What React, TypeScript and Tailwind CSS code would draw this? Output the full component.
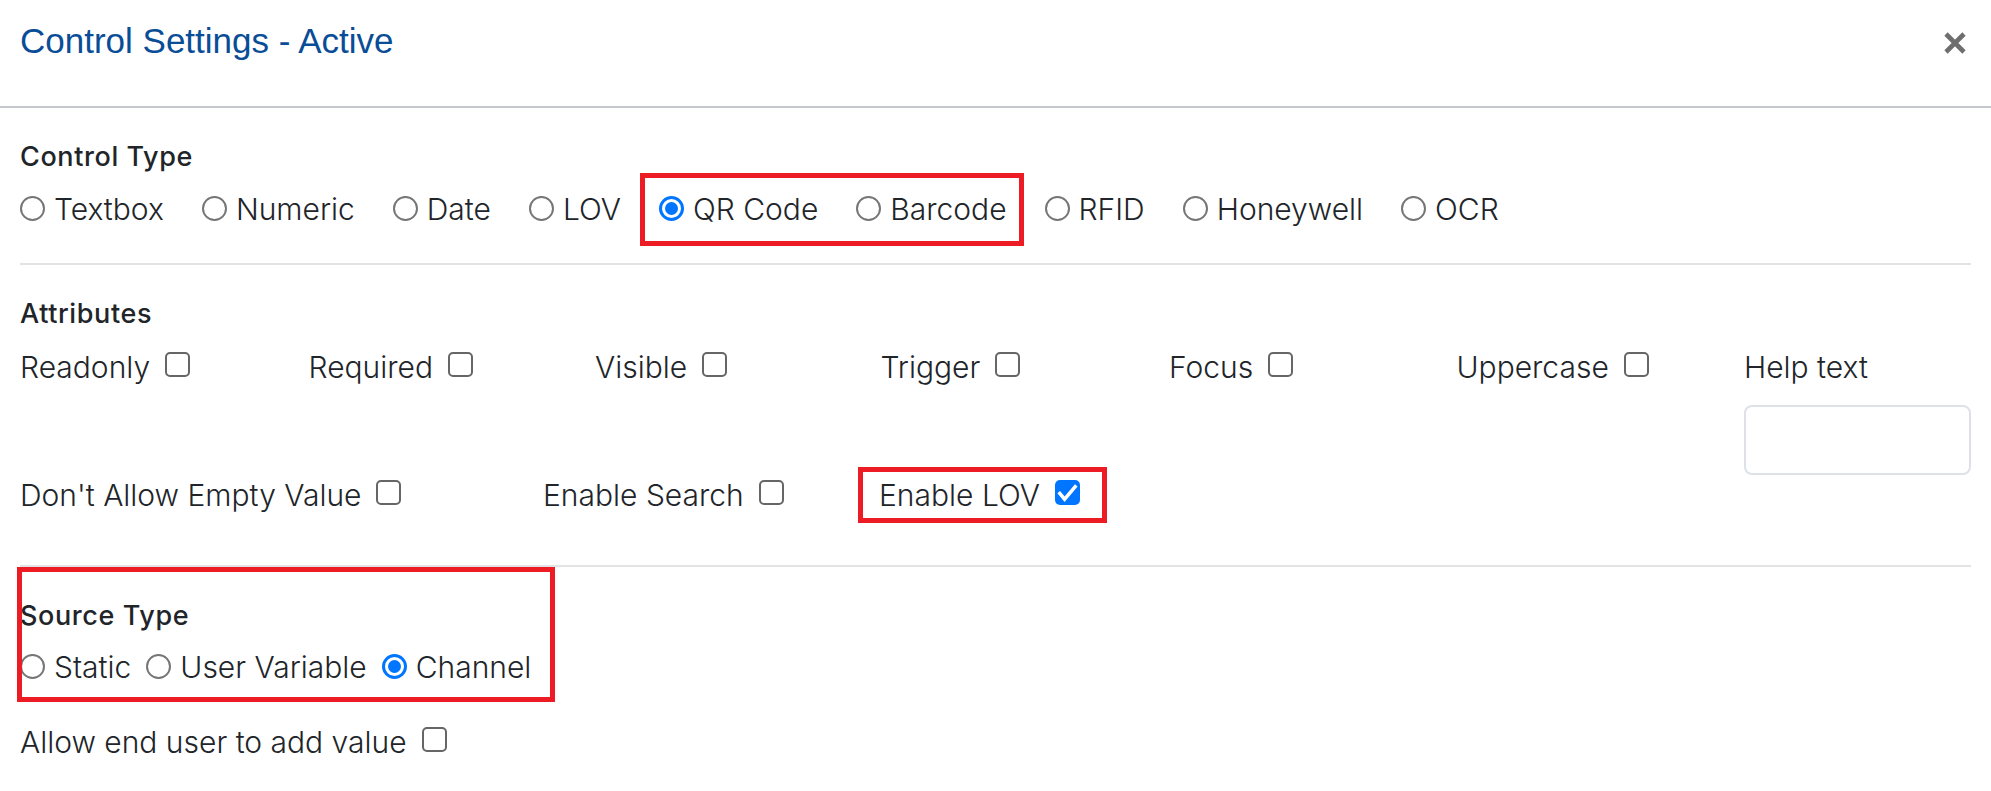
import { ReactNode } from "react";

function Radio({ checked }: { checked?: boolean }) {
  if (checked) {
    return (
      <span className="mb-[2px] flex h-[25px] w-[25px] shrink-0 items-center justify-center rounded-full border-[3px] border-[#0075ff] bg-white">
        <span className="h-[13px] w-[13px] rounded-full bg-[#0075ff]" />
      </span>
    );
  }
  return <span className="mb-[2px] h-[25px] w-[25px] shrink-0 rounded-full border-2 border-[#767676] bg-white" />;
}

function Check({ checked }: { checked?: boolean }) {
  if (checked) {
    return (
      <span className="mb-[5px] flex h-[25px] w-[25px] shrink-0 items-center justify-center rounded-[5px] bg-[#0075ff]">
        <svg width="25" height="25" viewBox="0 0 26 26">
          <path d="M5 14l5 6 11-13" fill="none" stroke="white" strokeWidth="3.6" strokeLinecap="square" />
        </svg>
      </span>
    );
  }
  return <span className="mb-[5px] h-[25px] w-[25px] shrink-0 rounded-[5px] border-2 border-[#666] bg-white" />;
}

function Option({ label, checked }: { label: string; checked?: boolean }) {
  return (
    <label className="flex items-center gap-[9px]">
      <Radio checked={checked} />
      <span className="whitespace-nowrap">{label}</span>
    </label>
  );
}

function Attr({ label, checked, className = "" }: { label: string; checked?: boolean; className?: string }) {
  return (
    <label className={`flex items-center gap-[15px] ${className}`}>
      <span className="whitespace-nowrap">{label}</span>
      <Check checked={checked} />
    </label>
  );
}

// red annotation frame drawn over the marked items
function Marked({ children, frame }: { children: ReactNode; frame: string }) {
  return (
    <div className="relative flex">
      {children}
      <span className={`pointer-events-none absolute border-[5px] border-[#ed1c24] ${frame}`} />
    </div>
  );
}

export default function App() {
  return (
    <div className="h-[791px] w-[1991px] overflow-hidden bg-white font-['Inter',sans-serif] text-[#212529]">
      <div className="flex h-[108px] justify-between border-b-2 border-[#c5c9ce] pl-[20px] pr-[24px]">
        <h1 className="pt-[23px] font-['Liberation_Sans',Arial,sans-serif] text-[35px] leading-none text-[#0a4d97]">
          Control Settings - Active
        </h1>
        <button className="mt-[31px] h-[24px] w-[24px]">
          <svg width="24" height="24" viewBox="0 0 24 24">
            <path d="M3 3L21 21M21 3L3 21" stroke="#6e6e6e" strokeWidth="4.6" />
          </svg>
        </button>
      </div>

      <div className="px-[20px] text-[30px] font-light leading-none">
        <h2 className="mt-[35px] text-[27px] font-medium tracking-[0.6px]">Control Type</h2>
        <div className="mt-[24px] flex gap-[38px]">
          <Option label="Textbox" />
          <Option label="Numeric" />
          <Option label="Date" />
          <Option label="LOV" />
          <Marked frame="-top-[21px] -bottom-[22px] -left-[19px] -right-[17px]">
            <div className="flex gap-[38px]">
              <Option label="QR Code" checked />
              <Option label="Barcode" />
            </div>
          </Marked>
          <Option label="RFID" />
          <Option label="Honeywell" />
          <Option label="OCR" />
        </div>

        <div className="mt-[39px] h-[2px] bg-[#e2e3e5]" />

        <h2 className="mt-[35px] text-[27px] font-medium tracking-[0.6px]">Attributes</h2>
        <div className="mt-[25px] flex">
          <Attr label="Readonly" className="w-[289px] self-start" />
          <Attr label="Required" className="w-[287px] self-start" />
          <Attr label="Visible" className="w-[286px] self-start" />
          <Attr label="Trigger" className="w-[289px] self-start" />
          <Attr label="Focus" className="w-[288px] self-start" />
          <Attr label="Uppercase" className="w-[288px] self-start" />
          <div className="flex flex-col">
            <span className="whitespace-nowrap">Help text</span>
            <input className="mt-[23px] h-[70px] w-[227px] rounded-[8px] border-2 border-[#dee2e6] outline-none" />
          </div>
        </div>
        <div className="mt-[5px] flex">
          <Attr label="Don't Allow Empty Value" className="w-[523px]" />
          <Attr label="Enable Search" className="w-[336px]" />
          <Marked frame="-top-[13px] -bottom-[13px] -left-[21px] -right-[27px]">
            <Attr label="Enable LOV" checked />
          </Marked>
        </div>

        <div className="mt-[55px] h-[2px] bg-[#e2e3e5]" />

        <div className="mt-[35px] flex">
          <Marked frame="-top-[35px] -bottom-[20px] -left-[3px] -right-[24px]">
            <div>
              <h2 className="text-[27px] font-medium tracking-[0.6px]">Source Type</h2>
              <div className="mt-[23px] flex gap-[15px]">
                <Option label="Static" />
                <Option label="User Variable" />
                <Option label="Channel" checked />
              </div>
            </div>
          </Marked>
        </div>

        <div className="mt-[45px] flex">
          <Attr label="Allow end user to add value" />
        </div>
      </div>
    </div>
  );
}
